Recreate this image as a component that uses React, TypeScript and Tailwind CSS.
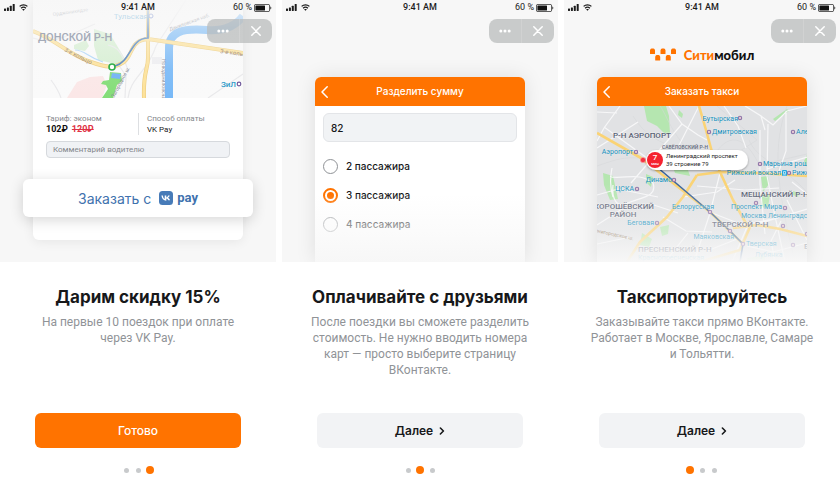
import { useState } from "react";
import type { ReactNode } from "react";

type Station = { x: number; y: number; text: string; before?: boolean };

// "before" labels sit to the left of their stop and end at x
const stations: Station[] = [
  { x: 141, y: 15, text: "Бутырская", before: true },
  { x: 115, y: 28, text: "Дмитровская" },
  { x: 199, y: 28, text: "Алексеевская" },
  { x: 36, y: 48, text: "Аэропорт", before: true },
  { x: 166, y: 60, text: "Марьина роща" },
  { x: 184, y: 69, text: "Рижский вокзал", before: true },
  { x: 195, y: 69, text: "Рижская" },
  { x: 75, y: 76, text: "Динамо", before: true },
  { x: 37, y: 85, text: "ЦСКА", before: true },
  { x: 117, y: 103, text: "Белорусская", before: true },
  { x: 185, y: 103, text: "Проспект Мира", before: true },
  { x: 144, y: 112, text: "Москва Ленинградская" },
  { x: 57, y: 119, text: "Беговая", before: true },
  { x: 137, y: 133, text: "Маяковская", before: true },
  { x: 149, y: 140, text: "Тверская" },
  { x: 158, y: 151, text: "Лубянка" },
  { x: 41, y: 154, text: "Краснопресненская" },
];

const stops = [
  [143, 12], [112, 26], [196, 26], [39, 46], [163, 58], [192, 67], [77, 74], [40, 83], [159, 97],
  [113, 106], [188, 102], [60, 117], [186, 120], [133, 125], [146, 138], [196, 139], [210, 128],
];

function StatusBar() {
  return (
    <div className="flex h-[15px] items-center px-1 font-[Roboto,sans-serif] text-[9px] font-medium text-[#1c1c1c]">
      <div className="flex flex-1 items-center gap-1">
        <svg width="11" height="7" viewBox="0 0 11 7" fill="currentColor">
          <rect x="0" y="4.6" width="2" height="2.4" rx=".4" />
          <rect x="2.9" y="3.4" width="2" height="3.6" rx=".4" />
          <rect x="5.8" y="1.8" width="2" height="5.2" rx=".4" />
          <rect x="8.7" y="0" width="2" height="7" rx=".4" />
        </svg>
        <svg width="9" height="7" viewBox="0 0 9 7" fill="none" stroke="currentColor" strokeWidth="1.3">
          <path d="M.6 2.4C2.8.3 6.2.3 8.4 2.4" />
          <path d="M2.1 4.2c1.3-1.2 3.5-1.2 4.8 0" />
          <path d="M4.5 6.8 3.2 5.5c.7-.6 1.9-.6 2.6 0Z" fill="currentColor" stroke="none" />
        </svg>
      </div>
      <span>9:41 AM</span>
      <div className="flex flex-1 items-center justify-end gap-0.5">
        <span className="whitespace-nowrap font-normal">60 %</span>
        <svg width="18" height="8" viewBox="0 0 18 8">
          <rect x=".4" y=".4" width="15.2" height="7.2" rx="1.4" fill="none" stroke="#222" strokeWidth=".8" />
          <rect x="1.4" y="1.4" width="9.6" height="5.2" rx=".5" fill="#111" />
          <path d="M16.4 2.6c1.2.4 1.2 2.4 0 2.8Z" fill="#222" />
        </svg>
      </div>
    </div>
  );
}

function AppControls() {
  return (
    <div className="mt-1 mr-1 ml-auto flex h-6 w-[65px] rounded-lg bg-[#b9bcbc]/75 text-white">
      <button type="button" aria-label="Меню" className="flex flex-1 items-center justify-center border-r border-white/15">
        <svg width="12" height="4" viewBox="0 0 12 4" fill="currentColor">
          <circle cx="1.8" cy="2" r="1.5" />
          <circle cx="6" cy="2" r="1.5" />
          <circle cx="10.2" cy="2" r="1.5" />
        </svg>
      </button>
      <button type="button" aria-label="Закрыть" className="flex flex-1 items-center justify-center">
        <svg width="10" height="10" viewBox="0 0 10 10" fill="none" stroke="currentColor" strokeWidth="1.5" strokeLinecap="round">
          <path d="m.8.8 8.4 8.4M9.2.8.8 9.2" />
        </svg>
      </button>
    </div>
  );
}

function CardHeader({ title }: { title: string }) {
  return (
    <div className="relative flex h-[29px] items-center justify-center rounded-t-md bg-[#ff7300] text-white">
      <button type="button" aria-label="Назад" className="absolute left-1.5 flex h-full items-center">
        <svg width="7" height="12" viewBox="0 0 7 12" fill="none" stroke="currentColor" strokeWidth="1.5" strokeLinecap="round" strokeLinejoin="round">
          <path d="M6.2.8 1 6l5.2 5.2" />
        </svg>
      </button>
      <h3 className="text-[10px] font-medium">{title}</h3>
    </div>
  );
}

function DistrictMap() {
  return (
    <svg className="block h-[98px] w-full" viewBox="0 0 210 98" preserveAspectRatio="xMidYMid slice" fontFamily="Roboto, sans-serif">
      <defs>
        <linearGradient id="fade-top" x1="0" y1="0" x2="0" y2="1">
          <stop offset="0" stopColor="#f7f7f7" stopOpacity=".95" />
          <stop offset=".3" stopColor="#f7f7f7" stopOpacity=".45" />
          <stop offset=".7" stopColor="#f7f7f7" stopOpacity=".1" />
          <stop offset="1" stopColor="#f7f7f7" stopOpacity="0" />
        </linearGradient>
      </defs>
      <rect width="210" height="98" fill="#fafafa" />
      <path d="M34 98 44 82l13-5 13-1 4 9-5 13Z" fill="#fbe7e7" />
      <path d="m61 29 16 5 15 25-5 6-22-5-4-14Z" fill="#d6efd2" />
      <path d="m41 45 12-5 3 6-4 5-11-2Z" fill="#d6efd2" />
      <path d="m77 72 11 1 1 8-5 4-4 13H69l6-9-2-4-5-1 2-3 6-1Z" fill="#84dd78" />
      <path d="m79 73 9 1-1 5-9-1Z" fill="#6fb1f5" />
      <g fill="none" stroke="#e9e9eb" strokeWidth="1.2">
        <path d="M18 80c6 8 8 12 10 18M95 98c2-20 20-26 28-52l30-46M75 45c9 2 13 5 20 25M0 38c20 6 30 0 62-14M92 98 93 76 85 64M175 98l35-24" />
      </g>
      <path d="M42 50c10 0 12 7 28 12" fill="none" stroke="#acd5f9" strokeWidth="1.2" />
      <path d="M119 57h10v7h-10Z" fill="#eeeef1" />
      <path d="M210 16c-8 11-20 15-36 14-25-2-38 2-38 18v50" fill="none" stroke="#78b9f7" strokeWidth="8" />
      <g fill="none" stroke="#eccb7c" strokeWidth="4">
        <path d="M0 31c24 9 34 23 58 31 14 5 22 7 33 0 9-7 6-22 24-23l95 14M115 8v50c0 12-5 13-4 40" />
      </g>
      <g fill="none" stroke="#fde29a" strokeWidth="2.8">
        <path d="M0 31c24 9 34 23 58 31 14 5 22 7 33 0 9-7 6-22 24-23l95 14M115 8v50c0 12-5 13-4 40" />
      </g>
      <path d="M82 66c16-4 15-28 33-28V8" fill="none" stroke="#4a7fc0" strokeWidth="1.7" />
      <circle cx="118" cy="16" r="2" fill="#fff" stroke="#5874c3" strokeWidth="1" />
      <g fontSize="6" fill="#8c7460">
        <text transform="translate(31 51) rotate(27)">3-е кольцо</text>
        <text transform="translate(187 53) rotate(8)">3-е кольцо</text>
      </g>
      <g fontSize="5" fill="#848995">
        <text transform="translate(129 59) rotate(90)">Новоданиловская</text>
        <text transform="translate(137 31) rotate(-20)">Даниловская наб.</text>
        <text transform="translate(81 98) rotate(-62)">Загородное ш.</text>
        <text transform="translate(20 16) rotate(-8)">Орджоникидзе</text>
      </g>
      <text x="115" y="19" fontSize="8" textAnchor="end" fill="#58a7d5">Тульская</text>
      <rect width="210" height="98" fill="url(#fade-top)" />
      <text x="5" y="41" fontSize="11" fontWeight="500" fill="#a5abb8">ДОНСКОЙ Р-Н</text>
      <text x="203" y="87" fontSize="8" fontWeight="500" textAnchor="end" fill="#2d9bc9">ЗиЛ</text>
      <circle cx="206" cy="84" r="1.8" fill="#fff" stroke="#725b9d" strokeWidth="1.2" />
      <circle cx="79" cy="67" r="3" fill="#fff" stroke="#2fae4a" strokeWidth="1.6" />
    </svg>
  );
}

function CityMap() {
  return (
    <svg className="block h-[156px] w-full" viewBox="0 0 210 156" preserveAspectRatio="xMidYMid slice" fontFamily="Roboto, sans-serif">
      <defs>
        <linearGradient id="fade-bottom" x1="0" y1="0" x2="0" y2="1">
          <stop offset=".5" stopColor="#f7f7f7" stopOpacity="0" />
          <stop offset=".8" stopColor="#f7f7f7" stopOpacity=".4" />
          <stop offset="1" stopColor="#f7f7f7" />
        </linearGradient>
        <filter id="pin-shadow" x="-20%" y="-40%" width="140%" height="200%">
          <feDropShadow dx="0" dy="1" stdDeviation="1.2" floodOpacity=".35" />
        </filter>
      </defs>
      <rect width="210" height="156" fill="#e1e2e4" />
      <g fill="#b5e6b0">
        <path d="M47 0h22l3 10 1 18-6-1-7-7-10-5Z" />
        <path d="M6 67 16 70l5 23-8 1-6-15ZM49 68l7 3-2 10-5-5ZM82 4l4 4-1 4-4-3ZM76 61l15 3 2 6-15-3ZM164 71l7-1 1 8-6 8ZM165 88l8 1-2 12-7 1ZM207 55l3-6v12ZM45 127l10 6-3 8-9-2ZM63 121l9-2-1 9-6 2ZM196 85l6 2-1 4-5-2ZM150 152l18-2v5h-18Z" />
        <path d="m176 13 14-10 2 2-14 10Z" />
      </g>
      <g fill="none" stroke="#d5d6d9" strokeWidth=".5">
        <path d="M36 10C60 50 102 40 126 56l34-22-40-34M120 45c18-24 34-4 42 14l48-11M190 0c-14 40-12 74 8 156M63 0c8 10 18 50 60 63M0 60c20-7 27-9 41-8M152 34c8 20 32 24 58 52" />
      </g>
      <g fill="none" stroke="#f7f7f8" strokeWidth="1.2">
        <path d="M0 6l20 1M23 0 7 22 0 35M7 21 50 52M41 16 0 42M72 0l13 18 16 11M85 18 34 77M101 29l9 5M102 0 71 61M127 0l14 20 8 22M148 0l16 10 4 14M164 10l12 9 14-14 20-5M163 24v54l5 50M171 18l-1 52 8 40 10 46M189 5v40l-7 20M210 51l-40 12M15 62c-2 10-2 20 1 29M13 71c18 2 28-5 43 6 5 15-14 14-30 22-9 0-11-10-10-20M0 89l21-6 40 8M0 119l25-16 32-4 24 8M66 111l23 14 26 1M86 91l34-5 18-12M100 80l48 4 34-2M123 67l-10 40-16 49M115 107l31 12 30-6M150 121l-15 35M150 121l60-18M184 115l-10 20 4 21M190 94l20 40M91 127l-23 29M0 138l34-7M195 76l15 12M110 145l30-12M150 140l26 6 34-9" />
      </g>
      <g fill="none" stroke="#fad375" strokeWidth="2.6" strokeLinejoin="round">
        <path d="m0 27 44 25 69 54 33 32M102 0l7 24 6 22 8 20 13 28 15 27M100 69l23-3 37 1 50 3M100 69 86 91l-16 20-27 25-13 20M136 122l24-3 23 4 27 7M103 156l40-12 10-23" />
      </g>
      <path d="m60 61 53 45 20 19 13 13-3 18" fill="none" stroke="#3b659c" strokeWidth="1.6" />
      <g fontSize="8" fontWeight="500" fill="#586073" stroke="#fff" strokeOpacity=".5" strokeWidth=".8" paintOrder="stroke">
        <text x="16" y="32">Р-Н АЭРОПОРТ</text>
        <text x="144" y="91">МЕЩАНСКИЙ Р-Н</text>
        <text x="57" y="103" textAnchor="end">ХОРОШЁВСКИЙ</text>
        <text x="26" y="111" textAnchor="middle">РАЙОН</text>
        <text x="115" y="121">ТВЕРСКОЙ Р-Н</text>
        <text x="41" y="146">ПРЕСНЕНСКИЙ Р-Н</text>
        <text x="207" y="143">Б</text>
      </g>
      <text x="65" y="43" fontSize="5" fontWeight="500" fill="#62697b">САВЁЛОВСКИЙ Р-Н</text>
      <text transform="translate(-2 126) rotate(12)" fontSize="5" fill="#8b6e4e">енигородское ш.</text>
      <g fontSize="7" fill="#0f8dba" stroke="#fff" strokeOpacity=".4" strokeWidth=".6" paintOrder="stroke">
        {stations.map((station) => (
          <text key={station.text} x={station.x} y={station.y} textAnchor={station.before ? "end" : "start"}>
            {station.text}
          </text>
        ))}
      </g>
      {stops.map(([x, y]) => (
        <circle key={`${x}-${y}`} cx={x} cy={y} r="1.7" fill="#e8c9d2" stroke="#8d74a8" strokeWidth="1.1" />
      ))}
      <rect x="185" y="64" width="5" height="6" rx="1" fill="#24a8df" />
      <path d="M186.5 65.5h2v2.4h-2Zm-.5 3.500h3" fill="none" stroke="#fff" strokeWidth=".6" />
      <rect width="210" height="156" fill="url(#fade-bottom)" />
      <circle cx="46" cy="54" r="2.6" fill="#f5333f" stroke="#f9a3a8" strokeWidth=".6" />
      <rect x="49" y="44" width="102" height="20" rx="10" fill="#fff" filter="url(#pin-shadow)" />
      <circle cx="58" cy="54" r="8" fill="#f5222f" />
      <g fill="#fff" textAnchor="middle" fontWeight="500">
        <text x="58" y="54" fontSize="8">7</text>
        <text x="58" y="59" fontSize="4">мин</text>
      </g>
      <g fontSize="6" fill="#222">
        <text x="69" y="52">Ленинградский проспект</text>
        <text x="69" y="60">39 строение 79</text>
      </g>
    </svg>
  );
}

function PayPreview() {
  return (
    <div className="mx-[33px] rounded-b-md bg-white shadow-[0_2px_12px_rgba(0,0,0,0.07)]">
      <DistrictMap />
      <div className="h-[142px] px-[13px] pt-[15px] font-[Roboto,sans-serif]">
        <dl className="grid grid-cols-2 text-[8px] leading-[11px] text-[#85888c]">
          <div>
            <dt>Тариф: эконом</dt>
            <dd className="flex gap-1 text-[9px] font-bold text-[#111]">
              <span>102₽</span>
              <s className="text-[#df3346]">120₽</s>
            </dd>
          </div>
          <div className="border-l border-[#dddfe2] pl-2">
            <dt>Способ оплаты</dt>
            <dd className="text-[#222]">VK Pay</dd>
          </div>
        </dl>
        <input
          aria-label="Комментарий водителю"
          placeholder="Комментарий водителю"
          className="mt-1.5 block h-[17px] w-full rounded border border-[#d6d9dd] bg-[#f0f2f5] px-1.5 text-[8px] outline-none placeholder:text-[#84878c]"
        />
        <div className="-mx-[23px] mt-[21px]">
          <button
            type="button"
            className="flex h-[38px] w-full items-center justify-center gap-2 rounded-md bg-white text-[14px] text-[#3f72ae] shadow-[0_3px_14px_rgba(0,0,0,0.16)]"
          >
            <span className="font-[Inter,sans-serif]">Заказать с</span>
            <span className="flex items-center gap-1">
              <svg width="14" height="14" viewBox="0 0 14 14">
                <rect width="14" height="14" rx="3.5" fill="#477bb8" />
                <path
                  d="M7.2 9.7C4.5 9.7 2.9 7.8 2.4 4.5h1.5c.3 2.1 1 3.2 1.8 3.4V4.5h1.6v1.9c.8-.1 1.5-.9 1.8-1.9h1.6c-.2 1-.9 1.8-1.6 2.3.8.4 1.5 1.2 1.9 2.5H9.3c-.3-.9-.9-1.6-2-1.8v2.2Z"
                  fill="#fff"
                />
              </svg>
              <span className="text-[13px] font-bold">pay</span>
            </span>
          </button>
        </div>
      </div>
    </div>
  );
}

function SplitPreview() {
  const [count, setCount] = useState(3);

  return (
    <div className="relative mx-[33px] mt-[77px] h-[185px] rounded-t-md bg-white shadow-[0_0_20px_rgba(0,0,0,0.1)]">
      <CardHeader title="Разделить сумму" />
      <div className="px-2 pt-[7px] text-[10px] font-medium text-[#17181a]">
        <input
          aria-label="Сумма"
          defaultValue="82"
          className="block h-[29px] w-full rounded-md border border-[#e3e5e8] bg-[#f1f3f5] px-[7px] outline-none"
        />
        <div className="mt-2.5">
          {[2, 3, 4].map((value) => (
            <label key={value} className="flex h-[29px] items-center gap-2">
              <input
                type="radio"
                name="passengers"
                checked={count === value}
                onChange={() => setCount(value)}
                className="size-[15px] shrink-0 appearance-none rounded-full border border-[#8f9296] p-[2px] checked:border-2 checked:border-[#ff7300] checked:bg-[#ff7300] checked:bg-clip-content"
              />
              {value} пассажира
            </label>
          ))}
        </div>
      </div>
      <div className="pointer-events-none absolute inset-x-0 bottom-0 h-[68px] bg-linear-to-b from-[#f7f7f7]/0 via-[#f9f9f9]/60 to-[#f7f7f7]" />
    </div>
  );
}

function TaxiPreview() {
  return (
    <>
      <div className="flex h-[77px] items-end justify-center gap-[7px] pb-3">
        <svg className="mb-1" width="27" height="13" viewBox="0 0 27 13" fill="#ff7300">
          <path d="M0 5.500V2.200Q.4.500 1.500.5h2Q4.600.5 5 2.200V5.500Q5 6 4.500 6H.5Q0 6 0 5.500ZM10.500 5.500V2.200q.4-1.700 1.500-1.700h2q1.100 0 1.500 1.700V5.500q0 .5-.5.5h-4q-.5 0-.5-.5ZM21 5.500V2.200Q21.400.5 22.500.5h2Q25.600.5 26 2.200V5.500q0 .5-.5.5h-4q-.5 0-.5-.5Z" />
          <path d="M5.200 12V8.700Q5.600 7 6.700 7h2q1.100 0 1.500 1.700V12q0 .5-.5.5h-4q-.5 0-.5-.5ZM15.800 12V8.700Q16.200 7 17.300 7h2q1.100 0 1.500 1.700V12q0 .5-.5.5h-4q-.5 0-.5-.5Z" />
        </svg>
        <span className="font-[Lato,sans-serif] text-[13px] leading-5 font-black text-[#111]">
          <span className="text-[#ff7300]">Сити</span>мобил
        </span>
      </div>
      <div className="mx-[33px] rounded-t-md bg-white shadow-[0_0_20px_rgba(0,0,0,0.1)]">
        <CardHeader title="Заказать такси" />
        <CityMap />
      </div>
    </>
  );
}

type ScreenProps = {
  title: string;
  text: string;
  step: number;
  last?: boolean;
  children: ReactNode;
};

function Screen({ title, text, step, last, children }: ScreenProps) {
  return (
    <section className="flex min-w-0 flex-col bg-white">
      <div className="relative h-[262px] overflow-hidden bg-[#f7f7f7]">
        {children}
        <div className="absolute inset-x-0 top-0">
          <StatusBar />
          <AppControls />
        </div>
      </div>
      <div className="px-[35px] pt-[23px] text-center">
        <h2 className="-mx-4 text-[17px] leading-6 font-bold text-[#17181a]">{title}</h2>
        <p className="-mx-4 mt-[5px] min-h-16 font-[Roboto,sans-serif] text-[12px] leading-4 whitespace-pre-line text-[#909397]">{text}</p>
        <button
          type="button"
          className={
            last
              ? "mt-[35px] flex h-[35px] w-full items-center justify-center rounded-md bg-[#ff7300] text-[12px] font-medium text-white"
              : "mt-[35px] flex h-[35px] w-full items-center justify-center gap-1.5 rounded-md bg-[#f2f3f5] text-[12px] font-semibold text-[#17181a]"
          }
        >
          {last ? "Готово" : "Далее"}
          {!last && (
            <svg width="6" height="8" viewBox="0 0 6 8" fill="none" stroke="currentColor" strokeWidth="1.6" strokeLinecap="round" strokeLinejoin="round">
              <path d="m1.4 1 3 3-3 3" />
            </svg>
          )}
        </button>
        <div className="mt-4 flex justify-center">
          {[0, 1, 2].map((dot) => (
            <span key={dot} className="flex size-3 items-center justify-center">
              <span className={dot === step ? "size-2 rounded-full bg-[#ff7300]" : "size-[5px] rounded-full bg-[#c8cacc]"} />
            </span>
          ))}
        </div>
      </div>
    </section>
  );
}

export default function App() {
  return (
    <main className="grid min-h-screen grid-cols-3 gap-1.5 bg-white font-[Inter,sans-serif]">
      <Screen title="Дарим скидку 15%" text={"На первые 10 поездок при оплате\nчерез VK Pay."} step={2} last>
        <PayPreview />
      </Screen>
      <Screen
        title="Оплачивайте с друзьями"
        text={"После поездки вы сможете разделить\nстоимость. Не нужно вводить номера\nкарт — просто выберите страницу\nВКонтакте."}
        step={1}
      >
        <SplitPreview />
      </Screen>
      <Screen
        title="Таксипортируйтесь"
        text={"Заказывайте такси прямо ВКонтакте.\nРаботает в Москве, Ярославле, Самаре\nи Тольятти."}
        step={0}
      >
        <TaxiPreview />
      </Screen>
    </main>
  );
}
